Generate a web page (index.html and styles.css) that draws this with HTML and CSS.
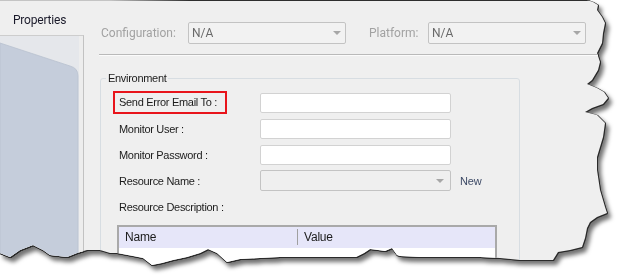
FILE: index.html
```html
<!DOCTYPE html>
<html>
<head>
<meta charset="utf-8">
<link rel="stylesheet" href="styles.css">
</head>
<body>
<div class="frame">
  <div class="shot">
    <aside class="sidebar">
      <div class="tab-title">Properties</div>
      <div class="nav-panel">
        <svg class="nav-svg" width="83" height="240" viewBox="0 0 83 240">
          <rect x="0" y="0" width="83" height="240" fill="#e5e7eb"/>
          <path d="M0 7 L70 30 Q78 32 78 40 L78 240 L0 240 Z" fill="#c5cddb" stroke="#b9c1cf" stroke-width="0.8"/>
          <rect x="79" y="0" width="4" height="240" fill="#ededed"/>
        </svg>
      </div>
    </aside>
    <main class="main">
      <div class="toolbar">
        <span class="tb-label">Configuration:</span>
        <div class="select tb-select"><span class="sel-text">N/A</span><i class="caret"></i></div>
        <span class="tb-label tb-label-2">Platform:</span>
        <div class="select tb-select"><span class="sel-text">N/A</span><i class="caret"></i></div>
      </div>
      <fieldset class="group">
        <legend class="group-title">Environment</legend>
        <div class="form">
          <span class="lbl lbl-hl">Send Error Email To :</span>
          <div class="input"></div>
          <span></span>
          <span class="lbl">Monitor User :</span>
          <div class="input"></div>
          <span></span>
          <span class="lbl">Monitor Password :</span>
          <div class="input"></div>
          <span></span>
          <span class="lbl">Resource Name :</span>
          <div class="select res-select"><i class="caret"></i></div>
          <span class="link">New</span>
          <span class="lbl">Resource Description :</span>
          <span></span>
          <span></span>
        </div>
        <div class="table">
          <div class="thead">
            <div class="th th-name">Name</div>
            <div class="th th-value">Value</div>
          </div>
          <div class="tbody"></div>
        </div>
      </fieldset>
    </main>
  </div>
</div>
</body>
</html>
```
FILE: styles.css
```css
* { box-sizing: border-box; }
html, body { margin: 0; padding: 0; background: #ffffff; }
body { width: 617px; height: 275px; overflow: hidden; font-family: "Liberation Sans", Arial, sans-serif; }

.frame {
  width: 617px;
  height: 275px;
  filter: drop-shadow(1px 0 0 #2a2a2a) drop-shadow(0 1px 0 #2a2a2a) drop-shadow(3px 4px 2px rgba(0,0,0,0.55));
}

.shot {
  width: 617px;
  height: 275px;
  display: flex;
  background:
    linear-gradient(to right, #c4c4c4 0, #c4c4c4 110px, #2e2e2e 190px, #2e2e2e 100%) 0 0 / 100% 1px no-repeat,
    #efefef;
  clip-path: polygon(0px 0px, 587px 0px, 593px 2px, 598px 5px, 597px 10px, 602px 17px, 605px 23px, 603px 33px, 602px 43px, 597px 53px, 600px 62px, 598px 70px, 592px 80px, 587px 84px, 597px 88px, 604px 92px, 608px 98px, 603px 104px, 592px 108px, 585px 112px, 597px 115px, 605px 123px, 603px 137px, 600px 147px, 597px 157px, 597px 170px, 600px 190px, 605px 207px, 607px 213px, 597px 217px, 590px 222px, 587px 228px, 585px 238px, 582px 247px, 570px 250px, 558px 252px, 553px 260px, 540px 260px, 520px 260px, 500px 258px, 480px 257px, 460px 257px, 440px 257px, 420px 257px, 400px 256px, 397px 255px, 392px 248px, 385px 251px, 378px 250px, 370px 249px, 364px 253px, 356px 257px, 340px 257px, 320px 257px, 300px 257px, 280px 257px, 260px 258px, 240px 259px, 227px 262px, 217px 253px, 208px 249px, 200px 253px, 187px 257px, 173px 260px, 162px 263px, 152px 265px, 143px 258px, 133px 256px, 117px 253px, 110px 253px, 100px 250px, 87px 250px, 77px 253px, 67px 257px, 50px 255px, 43px 250px, 33px 245px, 20px 250px, 10px 257px, 0px 253px);
}

/* sidebar */
.sidebar {
  width: 84px;
  flex: none;
  display: flex;
  flex-direction: column;
}
.tab-title {
  height: 35px;
  padding: 13px 0 0 13px;
  font-family: Roboto, "Liberation Sans", sans-serif;
  font-size: 12px;
  letter-spacing: -0.2px;
  color: #1a1a2a;
  line-height: 14px;
}
.nav-panel {
  flex: 1;
  border-top: 1px solid #cdcdcd;
  border-right: 1px solid #c2c2c2;
  overflow: hidden;
}
.nav-svg { display: block; }

/* main */
.main {
  flex: 1;
  display: flex;
  flex-direction: column;
}
.toolbar {
  height: 61px;
  margin-left: 15px;
  padding: 22px 0 0 2px;
  display: flex;
  align-items: flex-start;
  border-bottom: 1px solid #b9b9b9;
  box-shadow: 0 1px 0 #fbfbfb;
  font-family: Roboto, "Liberation Sans", sans-serif;
  font-size: 12px;
}
.tb-label {
  color: #a2a2a2;
  line-height: 22px;
  width: 87px;
}
.tb-label-2 { margin-left: 23px; width: 59px; }

.select {
  position: relative;
  border: 1px solid #c3c3c3;
  border-radius: 2px;
  background: #f2f2f2;
  display: flex;
  align-items: center;
}
.tb-select {
  width: 158px;
  height: 22px;
  padding-left: 3px;
}
.sel-text { color: #6a6a6a; font-size: 12px; }
.caret {
  margin-left: auto;
  margin-right: 4px;
  width: 0;
  height: 0;
  border-left: 4px solid transparent;
  border-right: 4px solid transparent;
  border-top: 4px solid #a7a7a7;
}

/* group */
.group {
  margin: 17px 0 0 16px;
  padding: 8px 0 0 0;
  width: 420px;
  height: 240px;
  border: 1px solid #d7dde2;
  border-radius: 3px;
  min-width: 0;
}
.group-title {
  margin-left: 5px;
  padding: 0 2px;
  font-size: 11px;
  line-height: 13px;
  letter-spacing: -0.3px;
  color: #1b1b1b;
}
.form {
  margin-left: 18px;
  display: grid;
  grid-template-columns: 141px 191px auto;
  grid-auto-rows: 20px;
  row-gap: 6px;
  align-items: center;
}
.lbl {
  font-size: 11px;
  letter-spacing: -0.3px;
  color: #1b1b1b;
  white-space: nowrap;
}
.lbl-hl {
  justify-self: start;
  margin-left: -6px;
  padding: 3px 8px 4px 4px;
  border: 2px solid #e8141b;
}
.input {
  height: 20px;
  background: #ffffff;
  border: 1px solid #d2d2d2;
  border-radius: 2px;
}
.res-select { height: 21px; background: #efefef; }
.res-select .caret { margin-right: 6px; }
.link {
  margin-left: 9px;
  font-size: 11px;
  color: #3d4a66;
  letter-spacing: -0.2px;
}

/* table */
.table {
  margin: 8px 0 0 16px;
  width: 380px;
  border: 2px solid #a9a9a9;
  background: #ffffff;
}
.thead {
  display: flex;
  height: 21px;
  background: #e6e6f9;
  align-items: center;
  font-size: 12px;
  color: #1b1b1b;
}
.th { padding-left: 6px; letter-spacing: -0.2px; }
.th-name {
  width: 179px;
  border-right: 1px solid #a0a0a0;
  line-height: 16px;
}
.tbody { height: 20px; }
```
